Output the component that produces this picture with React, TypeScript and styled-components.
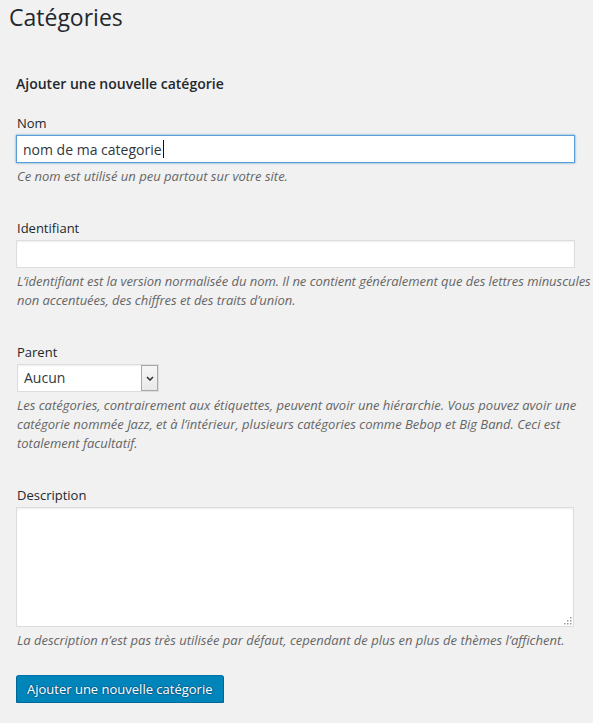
import React from "react";
import styled, { createGlobalStyle } from "styled-components";

const Global = createGlobalStyle`
  html, body { margin: 0; padding: 0; background: #f1f1f1; }
  body {
    font-family: "Open Sans", "Noto Sans", sans-serif;
    color: #444;
    overflow: hidden;
  }
  * { box-sizing: border-box; }
`;

const Page = styled.div`
  width: 593px;
  padding: 3px 0 0 9px;
`;

const Title = styled.h1`
  margin: 0;
  font-size: 23px;
  font-weight: 400;
  line-height: 29px;
  color: #23282d;
`;

const Form = styled.form`
  margin: 42px 0 0 7px;
  width: 560px;
`;

const Heading = styled.h2`
  margin: 0 0 20px;
  font-size: 14px;
  font-weight: 600;
  line-height: 20px;
  color: #23282d;
`;

const Field = styled.div<{ $gap?: number }>`
  margin-bottom: ${(p) => p.$gap ?? 33}px;
`;

const Label = styled.label`
  display: block;
  padding-left: 1px;
  margin-bottom: 3px;
  font-size: 13px;
  line-height: 18px;
  color: #23282d;
`;

const TextBox = styled.div<{ $focused?: boolean }>`
  display: flex;
  align-items: center;
  width: 559px;
  height: 28px;
  padding: 0 6px;
  background: #fff;
  border: 1px solid ${(p) => (p.$focused ? "#5b9dd9" : "#ddd")};
  box-shadow: ${(p) =>
    p.$focused
      ? "0 0 2px rgba(30,140,190,.8)"
      : "inset 0 1px 2px rgba(0,0,0,.07)"};
  font-size: 14px;
  color: #32373c;
`;

const Caret = styled.span`
  display: inline-block;
  width: 1px;
  height: 18px;
  margin-left: 1px;
  background: #111;
`;

const Hint = styled.p<{ $tight?: boolean }>`
  margin: 4px 0 0;
  padding-left: 1px;
  font-size: 13px;
  font-style: italic;
  line-height: 19px;
  color: #666;
  white-space: nowrap;
  letter-spacing: ${(p) => (p.$tight ? "-0.04px" : "normal")};
`;

const SelectBox = styled.div`
  display: flex;
  width: 142px;
  height: 28px;
  margin-left: 1px;
  background: #fff;
  border: 1px solid #ddd;
  box-shadow: inset 0 1px 2px rgba(0,0,0,.07);
`;

const SelectValue = styled.span`
  flex: 1;
  padding-left: 6px;
  font-size: 14px;
  line-height: 26px;
  color: #32373c;
`;

const SelectArrow = styled.span`
  display: flex;
  align-items: center;
  justify-content: center;
  width: 17px;
  border: 1px solid #a8a8a8;
  background: linear-gradient(#f6f6f6, #e9e9e9);
`;

const AreaWrap = styled.div`
  position: relative;
  width: 558px;
`;

const Area = styled.textarea`
  display: block;
  width: 558px;
  height: 120px;
  margin: 0;
  padding: 4px 6px;
  background: #fff;
  border: 1px solid #ddd;
  box-shadow: inset 0 1px 2px rgba(0,0,0,.07);
  resize: none;
  outline: none;
  font-family: inherit;
  font-size: 14px;
`;

const Grip = styled.svg`
  position: absolute;
  right: 2px;
  bottom: 2px;
`;

const Button = styled.button`
  height: 28px;
  padding: 0 10px;
  font-family: inherit;
  font-size: 13px;
  line-height: 26px;
  color: #fff;
  background: #0085ba;
  border: 1px solid #0073aa;
  border-color: #0073aa #006799 #006799;
  border-radius: 3px;
  box-shadow: 0 1px 0 #006799;
  text-shadow: 0 -1px 1px #006799, 1px 0 1px #006799, 0 1px 1px #006799, -1px 0 1px #006799;
  cursor: pointer;
`;

export default function App() {
  return (
    <>
      <Global />
      <Page>
        <Title>Catégories</Title>
        <Form onSubmit={(e) => e.preventDefault()}>
          <Heading>Ajouter une nouvelle catégorie</Heading>

          <Field>
            <Label>Nom</Label>
            <TextBox $focused role="textbox">
              nom de ma categorie
              <Caret />
            </TextBox>
            <Hint>Ce nom est utilisé un peu partout sur votre site.</Hint>
          </Field>

          <Field>
            <Label>Identifiant</Label>
            <TextBox role="textbox" />
            <Hint $tight>
              L’identifiant est la version normalisée du nom. Il ne contient généralement que des lettres minuscules
              <br />
              non accentuées, des chiffres et des traits d’union.
            </Hint>
          </Field>

          <Field>
            <Label>Parent</Label>
            <SelectBox role="listbox">
              <SelectValue>Aucun</SelectValue>
              <SelectArrow>
                <svg width="8" height="5" viewBox="0 0 8 5">
                  <path d="M1 1 L4 4 L7 1" fill="none" stroke="#333" strokeWidth="1.6" />
                </svg>
              </SelectArrow>
            </SelectBox>
            <Hint>
              Les catégories, contrairement aux étiquettes, peuvent avoir une hiérarchie. Vous pouvez avoir une
              <br />
              catégorie nommée Jazz, et à l’intérieur, plusieurs catégories comme Bebop et Big Band. Ceci est
              <br />
              totalement facultatif.
            </Hint>
          </Field>

          <Field $gap={25}>
            <Label>Description</Label>
            <AreaWrap>
              <Area />
              <Grip width="9" height="9" viewBox="0 0 9 9">
                <g fill="#9a9a9a">
                  <rect x="7" y="1" width="1.5" height="1.5" />
                  <rect x="4" y="4" width="1.5" height="1.5" />
                  <rect x="7" y="4" width="1.5" height="1.5" />
                  <rect x="1" y="7" width="1.5" height="1.5" />
                  <rect x="4" y="7" width="1.5" height="1.5" />
                  <rect x="7" y="7" width="1.5" height="1.5" />
                </g>
              </Grip>
            </AreaWrap>
            <Hint>La description n’est pas très utilisée par défaut, cependant de plus en plus de thèmes l’affichent.</Hint>
          </Field>

          <Button type="submit">Ajouter une nouvelle catégorie</Button>
        </Form>
      </Page>
    </>
  );
}
